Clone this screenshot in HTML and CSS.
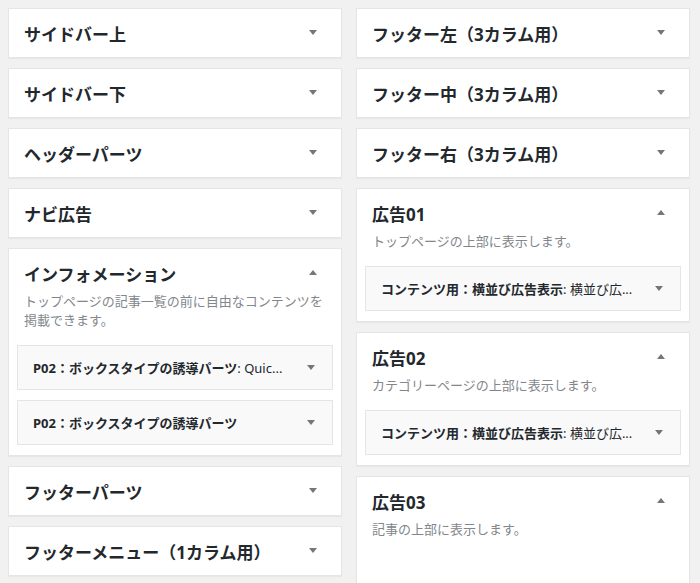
FILE: index.html
```html
<!DOCTYPE html>
<html lang="ja">
<head>
    <meta charset="UTF-8">
    <title>ウィジェット</title>
    <link rel="stylesheet" href="styles.css">
</head>
<body>
    <div class="widgets">
        <div class="column">
            <div class="sidebar">
                <div class="sidebar-head"><h2>サイドバー上</h2><span class="arrow down"></span></div>
            </div>
            <div class="sidebar">
                <div class="sidebar-head"><h2>サイドバー下</h2><span class="arrow down"></span></div>
            </div>
            <div class="sidebar">
                <div class="sidebar-head"><h2>ヘッダーパーツ</h2><span class="arrow down"></span></div>
            </div>
            <div class="sidebar">
                <div class="sidebar-head"><h2>ナビ広告</h2><span class="arrow down"></span></div>
            </div>
            <div class="sidebar open">
                <div class="sidebar-head"><h2>インフォメーション</h2><span class="arrow up"></span></div>
                <p class="desc">トップページの記事一覧の前に自由なコンテンツを掲載できます。</p>
                <div class="widget">
                    <h3>P02：ボックスタイプの誘導パーツ<span class="in-title">: Quic...</span></h3>
                    <span class="arrow down"></span>
                </div>
                <div class="widget">
                    <h3>P02：ボックスタイプの誘導パーツ</h3>
                    <span class="arrow down"></span>
                </div>
            </div>
            <div class="sidebar">
                <div class="sidebar-head"><h2>フッターパーツ</h2><span class="arrow down"></span></div>
            </div>
            <div class="sidebar">
                <div class="sidebar-head"><h2>フッターメニュー（1カラム用）</h2><span class="arrow down"></span></div>
            </div>
        </div>

        <div class="column">
            <div class="sidebar">
                <div class="sidebar-head"><h2>フッター左（3カラム用）</h2><span class="arrow down"></span></div>
            </div>
            <div class="sidebar">
                <div class="sidebar-head"><h2>フッター中（3カラム用）</h2><span class="arrow down"></span></div>
            </div>
            <div class="sidebar">
                <div class="sidebar-head"><h2>フッター右（3カラム用）</h2><span class="arrow down"></span></div>
            </div>
            <div class="sidebar open">
                <div class="sidebar-head"><h2>広告01</h2><span class="arrow up"></span></div>
                <p class="desc">トップページの上部に表示します。</p>
                <div class="widget">
                    <h3>コンテンツ用：横並び広告表示<span class="in-title">: 横並び広...</span></h3>
                    <span class="arrow down"></span>
                </div>
            </div>
            <div class="sidebar open">
                <div class="sidebar-head"><h2>広告02</h2><span class="arrow up"></span></div>
                <p class="desc">カテゴリーページの上部に表示します。</p>
                <div class="widget">
                    <h3>コンテンツ用：横並び広告表示<span class="in-title">: 横並び広...</span></h3>
                    <span class="arrow down"></span>
                </div>
            </div>
            <div class="sidebar open">
                <div class="sidebar-head"><h2>広告03</h2><span class="arrow up"></span></div>
                <p class="desc">記事の上部に表示します。</p>
                <div class="drop-area"></div>
            </div>
        </div>
    </div>
</body>
</html>
```

FILE: styles.css
```css
html, body {
    height: 583px;
    overflow: hidden;
}
body {
    margin: 0;
    padding: 8px 10px 0 8px;
    box-sizing: border-box;
    background-color: #f1f1f1;
    font-family: "Noto Sans", "Noto Sans CJK JP", sans-serif;
    color: #23282d;
}
.widgets {
    display: grid;
    grid-template-columns: 334px 334px;
    column-gap: 14px;
    align-items: start;
}
.column {
    display: flex;
    flex-direction: column;
    gap: 10px;
}
.sidebar {
    background-color: #fff;
    border: 1px solid #e5e5e5;
    box-shadow: 0 1px 1px rgba(0,0,0,0.04);
}
.sidebar-head {
    height: 48px;
    display: flex;
    align-items: center;
    justify-content: space-between;
    padding: 0 24px 0 15px;
}
.sidebar-head h2 {
    margin: 0;
    font-size: 17px;
    font-weight: bold;
    line-height: 1;
    padding-top: 3px;
}
.sidebar-head .arrow {
    margin-top: -2px;
}
.arrow {
    width: 0;
    height: 0;
    border-left: 4px solid transparent;
    border-right: 4px solid transparent;
}
.arrow.down {
    border-top: 5px solid #72777c;
}
.arrow.up {
    border-bottom: 5px solid #72777c;
}
.desc {
    margin: -5px 0 15px;
    padding: 0 15px;
    font-size: 13px;
    line-height: 19px;
    color: #82878c;
}
.widget {
    margin: 0 8px 10px;
    height: 43px;
    background-color: #f9f9f9;
    border: 1px solid #e5e5e5;
    display: flex;
    align-items: center;
    justify-content: space-between;
    padding: 0 17px 0 15px;
}
.widget h3 {
    margin: 0;
    font-size: 13px;
    font-weight: bold;
    white-space: nowrap;
}
.in-title {
    font-weight: normal;
}
.drop-area {
    height: 40px;
}
```
